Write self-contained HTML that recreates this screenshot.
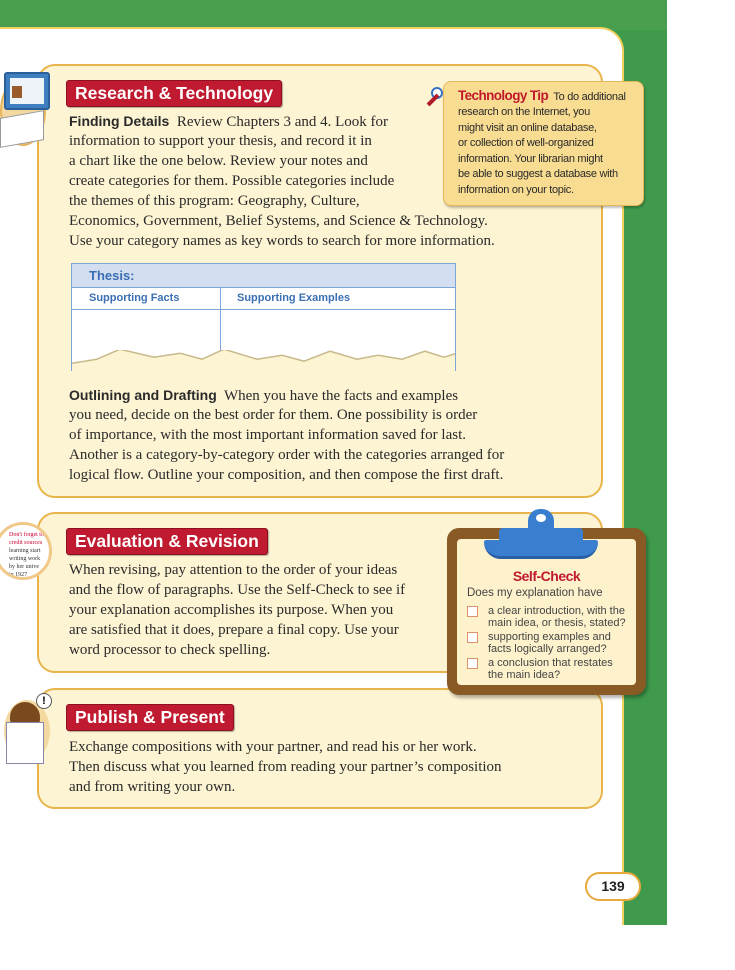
<!DOCTYPE html>
<html><head><style>
*{margin:0;padding:0;box-sizing:border-box}
body{width:735px;height:970px;position:relative;background:#fff;overflow:hidden;font-family:"Liberation Serif",serif;}
.abs{position:absolute}
.box{position:absolute;left:37px;width:566px;background:#fdf4d3;border:2px solid #e9b44c;border-radius:18px}
.hdr{position:absolute;left:66px;height:27px;background:#bf1a2f;border:1px solid #8e0f1f;border-radius:3px;color:#fff;font-family:"Liberation Sans",sans-serif;font-weight:bold;font-size:17.5px;line-height:25px;padding:0 8px;box-shadow:1px 1px 1px rgba(0,0,0,.3)}
.t{position:absolute;left:69px;font-size:15px;line-height:20px;color:#2a2a2a;white-space:nowrap}
.sans{font-family:"Liberation Sans",sans-serif}
.tip{position:absolute;font-family:"Liberation Sans",sans-serif;font-size:11px;line-height:15.5px;color:#2a2a2a;white-space:nowrap;letter-spacing:-.3px}
.sc{font-family:"Liberation Sans",sans-serif;font-size:11px;line-height:12px;color:#444;white-space:nowrap}
.cb{position:absolute;width:11px;height:11px;border:1px solid #e0906a;background:#fff}
</style></head><body>
<div class="abs" style="left:0;top:0;width:667px;height:925px;background:#3f9a4c"></div>
<div class="abs" style="left:0;top:0;width:667px;height:30px;background:#4a9f4f"></div>
<div class="abs" style="left:-20px;top:27px;width:644px;height:898px;background:#fff;border:2px solid #f2d060;border-bottom:none;border-radius:0 24px 0 0"></div>

<!-- box 1 -->
<div class="box" style="top:64px;height:434px"></div>
<div class="abs" style="left:0;top:70px;width:52px;height:80px;">
<div class="abs" style="left:0;top:6px;width:46px;height:70px;border-radius:50%;background:#f3d9a0;border:2px solid #e6b45a"></div>
<div class="abs" style="left:4px;top:2px;width:46px;height:38px;background:#3f7fc0;border:2px solid #2a5f9a;border-radius:3px"></div>
<div class="abs" style="left:10px;top:8px;width:34px;height:26px;background:#eef3fa"></div>
<div class="abs" style="left:12px;top:16px;width:10px;height:12px;background:#9a5a2a"></div>
<div class="abs" style="left:0;top:44px;width:44px;height:30px;background:#fff;border:1px solid #999;transform:skewY(-10deg)"></div>
</div>
<div class="hdr" style="top:80px">Research &amp; Technology</div>
<div class="t" style="top:111px"><b class="sans" style="font-size:14px">Finding Details</b>&nbsp; Review Chapters 3 and 4. Look for</div>
<div class="t" style="top:131px">information to support your thesis, and record it in</div>
<div class="t" style="top:151px">a chart like the one below. Review your notes and</div>
<div class="t" style="top:171px">create categories for them. Possible categories include</div>
<div class="t" style="top:191px">the themes of this program: Geography, Culture,</div>
<div class="t" style="top:211px">Economics, Government, Belief Systems, and Science &amp; Technology.</div>
<div class="t" style="top:231px">Use your category names as key words to search for more information.</div>

<div class="abs" style="left:443px;top:81px;width:201px;height:125px;background:#f8dc92;border:1px solid #e5b85a;border-radius:8px;box-shadow:1px 2px 2px rgba(0,0,0,.25)"></div>
<div class="abs" style="left:431px;top:87px;width:12px;height:12px;border:2px solid #3a72c0;border-radius:50%;background:#fff"></div>
<div class="abs" style="left:426px;top:98px;width:14px;height:4px;background:#b01a2a;transform:rotate(-45deg)"></div>
<div class="tip" style="left:458px;top:88px"><b style="color:#c0192c;font-size:13.5px;letter-spacing:-.6px">Technology Tip</b>&nbsp; To do additional</div>
<div class="tip" style="left:458px;top:105px">research on the Internet, you</div>
<div class="tip" style="left:458px;top:120.5px">might visit an online database,</div>
<div class="tip" style="left:458px;top:136px">or collection of well-organized</div>
<div class="tip" style="left:458px;top:151.5px">information. Your librarian might</div>
<div class="tip" style="left:458px;top:167px">be able to suggest a database with</div>
<div class="tip" style="left:458px;top:182.5px">information on your topic.</div>

<div class="abs" style="left:71px;top:263px;width:385px;height:108px;background:#fff;border:1px solid #7aa6d8;border-bottom:none;overflow:hidden">
<div style="height:24px;background:#d3def0;border-bottom:1px solid #7aa6d8;font-family:'Liberation Sans',sans-serif;font-weight:bold;color:#3a6fb5;font-size:13px;line-height:24px;padding-left:17px">Thesis:</div>
<div style="height:22px;border-bottom:1px solid #7aa6d8;font-family:'Liberation Sans',sans-serif;font-weight:bold;color:#3a6fb5;font-size:11px;line-height:21px;position:relative"><span style="position:absolute;left:17px">Supporting Facts</span><span style="position:absolute;left:165px">Supporting Examples</span></div>
<div class="abs" style="left:148px;top:24px;width:1px;height:90px;background:#7aa6d8"></div>
<svg class="abs" style="left:0;top:86px" width="385" height="22"><polyline points="0,14 25,10 48,0 82,8 108,4 130,10 152,0 185,10 210,6 232,12 258,2 285,10 306,6 330,10 353,2 372,8 385,4" fill="none" stroke="#c8b88a" stroke-width="3"/><polygon points="0,22 0,14 25,10 48,0 82,8 108,4 130,10 152,0 185,10 210,6 232,12 258,2 285,10 306,6 330,10 353,2 372,8 385,4 385,22" fill="#fdf4d3"/></svg>
</div>

<div class="t" style="top:385px"><b class="sans" style="font-size:14px">Outlining and Drafting</b>&nbsp; When you have the facts and examples</div>
<div class="t" style="top:405px">you need, decide on the best order for them. One possibility is order</div>
<div class="t" style="top:425px">of importance, with the most important information saved for last.</div>
<div class="t" style="top:445px">Another is a category-by-category order with the categories arranged for</div>
<div class="t" style="top:465px">logical flow. Outline your composition, and then compose the first draft.</div>

<!-- box 2 -->
<div class="box" style="top:512px;height:161px"></div>
<div class="abs" style="left:-6px;top:522px;width:58px;height:58px;border-radius:50%;background:#fff;border:3px solid #f0c98a;font-size:6px;color:#c03;padding:6px 0 0 12px;line-height:8px;overflow:hidden">Don't forget to<br>credit sources<br><span style="color:#333">learning start<br>writing work<br>by her unive<br>in 1927</span></div>
<div class="hdr" style="top:528px">Evaluation &amp; Revision</div>
<div class="t" style="top:560px">When revising, pay attention to the order of your ideas</div>
<div class="t" style="top:580px">and the flow of paragraphs. Use the Self-Check to see if</div>
<div class="t" style="top:600px">your explanation accomplishes its purpose. When you</div>
<div class="t" style="top:620px">are satisfied that it does, prepare a final copy. Use your</div>
<div class="t" style="top:640px">word processor to check spelling.</div>

<!-- box 3 -->
<div class="box" style="top:688px;height:121px"></div>
<div class="abs" style="left:4px;top:700px;width:46px;height:62px;background:#f3d9a0;border-radius:50%"></div>
<div class="abs" style="left:10px;top:702px;width:30px;height:22px;background:#7a4a1e;border-radius:15px 15px 4px 4px"></div>
<div class="abs" style="left:6px;top:722px;width:38px;height:42px;background:#fff;border:1px solid #88a"></div>
<div class="abs" style="left:36px;top:693px;width:16px;height:16px;background:#fff;border:1px solid #555;border-radius:50%;font:bold 11px 'Liberation Sans',sans-serif;text-align:center;line-height:14px">!</div>
<div class="hdr" style="top:704px">Publish &amp; Present</div>
<div class="t" style="top:737px">Exchange compositions with your partner, and read his or her work.</div>
<div class="t" style="top:757px">Then discuss what you learned from reading your partner’s composition</div>
<div class="t" style="top:777px">and from writing your own.</div>

<!-- clipboard -->
<div class="abs" style="left:447px;top:528px;width:199px;height:167px;background:#8a5a24;border-radius:12px;box-shadow:2px 3px 3px rgba(0,0,0,.3)"></div>
<div class="abs" style="left:457px;top:539px;width:179px;height:146px;background:#fdf2cc;border-radius:4px"></div>
<div class="abs" style="left:528px;top:509px;width:26px;height:22px;background:#3a7fcf;border-radius:12px 12px 0 0"></div>
<div class="abs" style="left:536px;top:514px;width:10px;height:8px;background:#fff;border-radius:50%"></div>
<div class="abs" style="left:499px;top:528px;width:84px;height:14px;background:#3a7fcf;border-radius:4px 4px 0 0"></div>
<div class="abs" style="left:484px;top:540px;width:114px;height:19px;background:#3a7fcf;border-radius:4px 4px 30px 30px;border-bottom:3px solid #2a5fa8"></div>
<div class="abs sans" style="left:457px;top:568px;width:179px;text-align:center;color:#bf1a2f;font-weight:bold;font-size:14px;letter-spacing:-.5px">Self-Check</div>
<div class="abs sc" style="left:467px;top:587px;font-size:11.5px">Does my explanation have</div>
<div class="cb" style="left:467px;top:606px"></div>
<div class="abs sc" style="left:488px;top:605px">a clear introduction, with the<br>main idea, or thesis, stated?</div>
<div class="cb" style="left:467px;top:632px"></div>
<div class="abs sc" style="left:488px;top:631px">supporting examples and<br>facts logically arranged?</div>
<div class="cb" style="left:467px;top:658px"></div>
<div class="abs sc" style="left:488px;top:657px">a conclusion that restates<br>the main idea?</div>

<div class="abs sans" style="left:585px;top:872px;width:56px;height:29px;background:#fff;border:2px solid #e8a93c;border-radius:15px;text-align:center;font-weight:bold;font-size:14px;line-height:25px;color:#222">139</div>
</body></html>
